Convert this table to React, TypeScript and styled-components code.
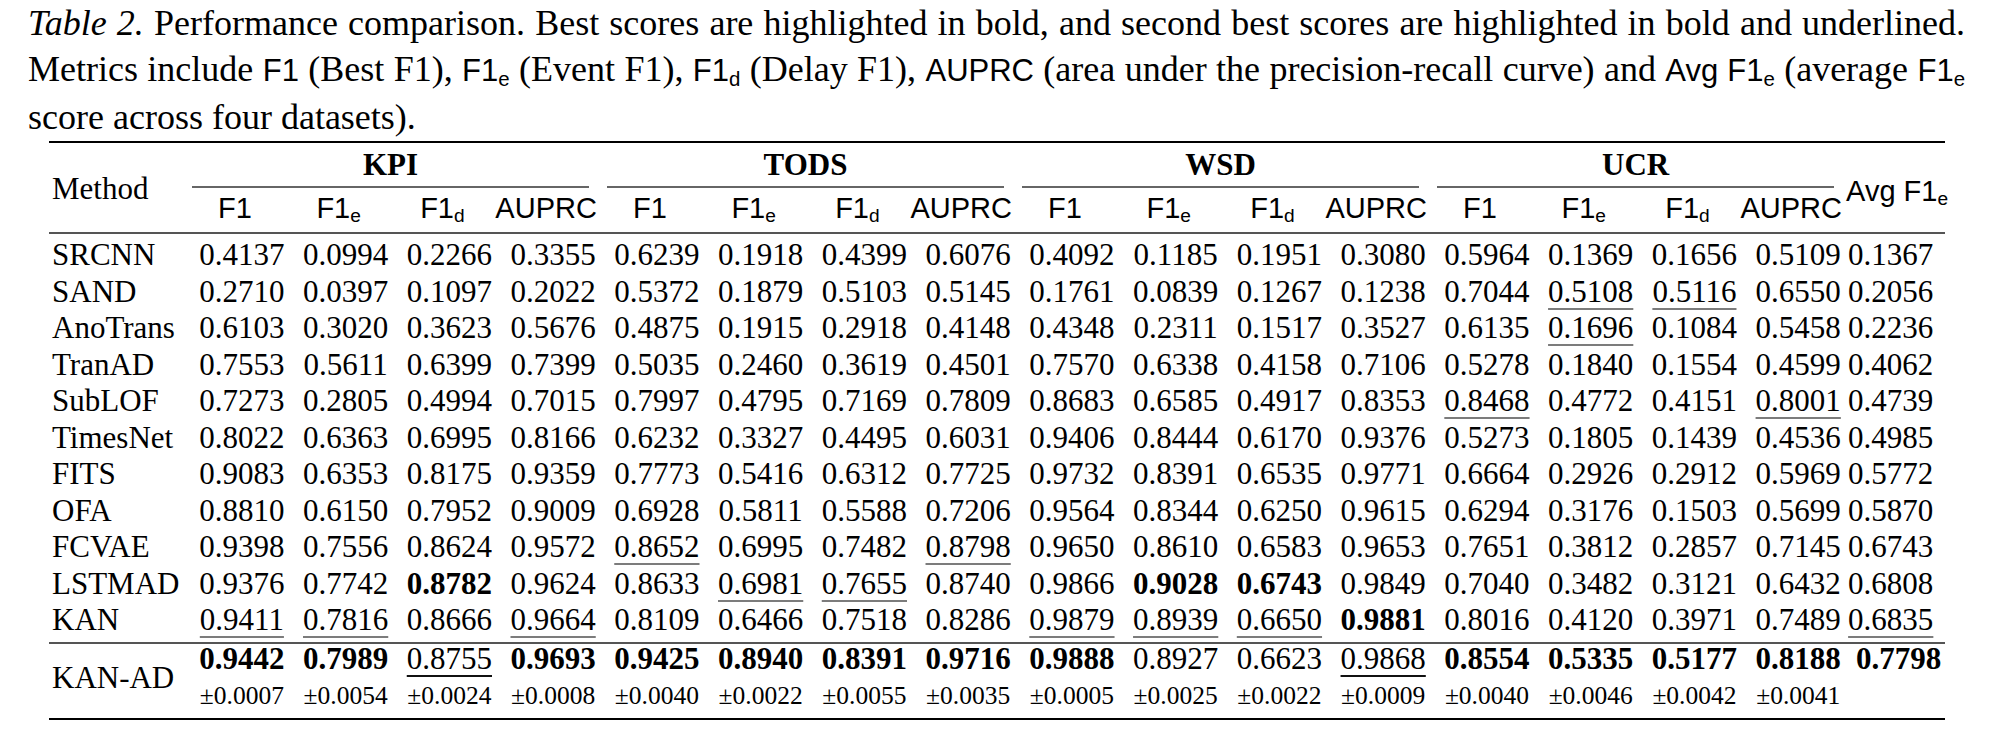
import React from "react";
import styled, { createGlobalStyle, css } from "styled-components";

const GlobalStyle = createGlobalStyle`
  html, body { margin: 0; padding: 0; background: #ffffff; }
  body { font-family: "Liberation Serif", "Times New Roman", serif; color: #000; }
`;

const Page = styled.div`
  width: 1990px;
  padding-left: 28px;
  box-sizing: border-box;
`;

const Caption = styled.div`
  width: 1937px;
  font-size: 36px;
  line-height: 46px;
`;

const CaptionLine = styled.div<{ $justify?: boolean }>`
  text-align: ${(p) => (p.$justify ? "justify" : "left")};
  text-align-last: ${(p) => (p.$justify ? "justify" : "left")};
`;

const Italic = styled.span`
  font-style: italic;
`;

const Sf = styled.span<{ $size: number }>`
  font-family: "Liberation Sans", Arial, sans-serif;
  font-size: ${(p) => p.$size}px;
`;

const Sub = styled.span`
  font-size: 0.66em;
  line-height: 0;
  vertical-align: -0.22em;
`;

const Table = styled.table`
  margin-top: 1px;
  margin-left: 21px;
  width: 1896px;
  table-layout: fixed;
  border-collapse: separate;
  border-spacing: 0;
  font-size: 31px;
  line-height: 30px;
`;

const Col = styled.col<{ $w: number }>`
  width: ${(p) => p.$w}px;
`;

const CornerHead = styled.th<{ $pt: number }>`
  box-sizing: border-box;
  font-weight: normal;
  text-align: left;
  vertical-align: middle;
  padding: ${(p) => p.$pt}px 0 0 3px;
  border-top: 2px solid #000;
  border-bottom: 2px solid #555;
  white-space: nowrap;
`;

const GroupHead = styled.th`
  box-sizing: border-box;
  height: 47px;
  padding: 0;
  border-top: 2px solid #000;
  vertical-align: bottom;
`;

const GroupTitle = styled.div`
  margin: 0 9px;
  height: 43px;
  line-height: 43px;
  border-bottom: 2px solid #666;
  font-weight: bold;
  text-align: center;
`;

const SubHead = styled.th`
  box-sizing: border-box;
  height: 46px;
  padding: 0 0 4px 0;
  font-weight: normal;
  text-align: center;
  vertical-align: middle;
  border-bottom: 2px solid #555;
  white-space: nowrap;
`;

type Place = "first" | "plain" | "lastPlain" | "oursTop" | "oursBottom";

const placeStyle = (p: Place) => {
  switch (p) {
    case "first":
      return css`
        height: 39.5px;
        padding-top: 3px;
      `;
    case "lastPlain":
      return css`
        height: 39.5px;
        padding-bottom: 3px;
      `;
    case "oursTop":
      return css`
        height: 33px;
        border-top: 2px solid #555;
      `;
    case "oursBottom":
      return css`
        height: 45px;
        border-bottom: 2px solid #000;
        font-size: 25.5px;
      `;
    default:
      return css`
        height: 36.5px;
      `;
  }
};

const NameCell = styled.td<{ $place: Place }>`
  box-sizing: border-box;
  padding: 0 0 0 3px;
  text-align: left;
  vertical-align: middle;
  white-space: nowrap;
  ${(p) => placeStyle(p.$place)}
`;

const OursName = styled.td`
  box-sizing: border-box;
  padding: 0 0 6px 3px;
  text-align: left;
  vertical-align: middle;
  white-space: nowrap;
  border-top: 2px solid #555;
  border-bottom: 2px solid #000;
`;

const Cell = styled.td<{ $place: Place; $avg?: boolean; $shift?: number }>`
  box-sizing: border-box;
  padding: 0;
  text-align: ${(p) => (p.$avg ? "left" : "center")};
  vertical-align: middle;
  white-space: nowrap;
  ${(p) => placeStyle(p.$place)}
  padding-left: ${(p) => (p.$shift !== undefined ? p.$shift : p.$avg ? 5 : 14)}px;
`;

const Bold = styled.span`
  font-weight: bold;
`;

const Underlined = styled.span<{ $tone: "grey" | "black" }>`
  text-decoration-line: underline;
  text-decoration-thickness: 2px;
  text-decoration-skip-ink: none;
  text-underline-offset: 6px;
  text-decoration-color: ${(p) => (p.$tone === "grey" ? "#7c7c7c" : "#111")};
`;

type Row = { name: string; values: string[] };

const rows: Row[] = [
  { name: "SRCNN", values: "0.4137 0.0994 0.2266 0.3355 0.6239 0.1918 0.4399 0.6076 0.4092 0.1185 0.1951 0.3080 0.5964 0.1369 0.1656 0.5109 0.1367".split(" ") },
  { name: "SAND", values: "0.2710 0.0397 0.1097 0.2022 0.5372 0.1879 0.5103 0.5145 0.1761 0.0839 0.1267 0.1238 0.7044 _0.5108 _0.5116 0.6550 0.2056".split(" ") },
  { name: "AnoTrans", values: "0.6103 0.3020 0.3623 0.5676 0.4875 0.1915 0.2918 0.4148 0.4348 0.2311 0.1517 0.3527 0.6135 _0.1696 0.1084 0.5458 0.2236".split(" ") },
  { name: "TranAD", values: "0.7553 0.5611 0.6399 0.7399 0.5035 0.2460 0.3619 0.4501 0.7570 0.6338 0.4158 0.7106 0.5278 0.1840 0.1554 0.4599 0.4062".split(" ") },
  { name: "SubLOF", values: "0.7273 0.2805 0.4994 0.7015 0.7997 0.4795 0.7169 0.7809 0.8683 0.6585 0.4917 0.8353 _0.8468 0.4772 0.4151 _0.8001 0.4739".split(" ") },
  { name: "TimesNet", values: "0.8022 0.6363 0.6995 0.8166 0.6232 0.3327 0.4495 0.6031 0.9406 0.8444 0.6170 0.9376 0.5273 0.1805 0.1439 0.4536 0.4985".split(" ") },
  { name: "FITS", values: "0.9083 0.6353 0.8175 0.9359 0.7773 0.5416 0.6312 0.7725 0.9732 0.8391 0.6535 0.9771 0.6664 0.2926 0.2912 0.5969 0.5772".split(" ") },
  { name: "OFA", values: "0.8810 0.6150 0.7952 0.9009 0.6928 0.5811 0.5588 0.7206 0.9564 0.8344 0.6250 0.9615 0.6294 0.3176 0.1503 0.5699 0.5870".split(" ") },
  { name: "FCVAE", values: "0.9398 0.7556 0.8624 0.9572 _0.8652 0.6995 0.7482 _0.8798 0.9650 0.8610 0.6583 0.9653 0.7651 0.3812 0.2857 0.7145 0.6743".split(" ") },
  { name: "LSTMAD", values: "0.9376 0.7742 *0.8782 0.9624 0.8633 _0.6981 _0.7655 0.8740 0.9866 *0.9028 *0.6743 0.9849 0.7040 0.3482 0.3121 0.6432 0.6808".split(" ") },
  { name: "KAN", values: "_0.9411 _0.7816 0.8666 _0.9664 0.8109 0.6466 0.7518 0.8286 _0.9879 _0.8939 _0.6650 *0.9881 0.8016 0.4120 0.3971 0.7489 _0.6835".split(" ") },
];

const ours = "*0.9442 *0.7989 _0.8755 *0.9693 *0.9425 *0.8940 *0.8391 *0.9716 *0.9888 0.8927 0.6623 _0.9868 *0.8554 *0.5335 *0.5177 *0.8188 *0.7798".split(" ");
const oursStd = "±0.0007 ±0.0054 ±0.0024 ±0.0008 ±0.0040 ±0.0022 ±0.0055 ±0.0035 ±0.0005 ±0.0025 ±0.0022 ±0.0009 ±0.0040 ±0.0046 ±0.0042 ±0.0041".split(" ");

const groups = ["KPI", "TODS", "WSD", "UCR"];

function Value({ v, tone }: { v: string; tone: "grey" | "black" }) {
  const text = v.replace(/^[*_]/, "");
  if (v.startsWith("_")) return <Underlined $tone={tone}>{text}</Underlined>;
  if (v.startsWith("*")) return <Bold>{text}</Bold>;
  return <>{text}</>;
}

function Metric({ name, sub, size }: { name: string; sub?: string; size: number }) {
  return (
    <Sf $size={size}>
      {name}
      {sub && <Sub>{sub}</Sub>}
    </Sf>
  );
}

const metricDefs: { name: string; sub?: string }[] = [
  { name: "F1" },
  { name: "F1", sub: "e" },
  { name: "F1", sub: "d" },
  { name: "AUPRC" },
];

export default function App() {
  const colWidths = [134, ...Array(16).fill(103.75), 102];
  return (
    <>
      <GlobalStyle />
      <Page>
        <Caption>
          <CaptionLine $justify>
            <Italic>Table 2.</Italic> Performance comparison. Best scores are highlighted in bold, and second best scores
            are highlighted in bold and underlined.
          </CaptionLine>
          <CaptionLine $justify>
            Metrics include <Metric name="F1" size={31} /> (Best F1), <Metric name="F1" sub="e" size={31} /> (Event F1),{" "}
            <Metric name="F1" sub="d" size={31} /> (Delay F1), <Metric name="AUPRC" size={31} /> (area under the
            precision-recall curve) and <Metric name="Avg F1" sub="e" size={31} /> (average{" "}
            <Metric name="F1" sub="e" size={31} />
          </CaptionLine>
          <CaptionLine>score across four datasets).</CaptionLine>
        </Caption>
        <Table>
          <colgroup>
            {colWidths.map((w, i) => (
              <Col key={i} $w={w} />
            ))}
          </colgroup>
          <thead>
            <tr>
              <CornerHead rowSpan={2} $pt={3}>
                Method
              </CornerHead>
              {groups.map((g) => (
                <GroupHead key={g} colSpan={4}>
                  <GroupTitle>{g}</GroupTitle>
                </GroupHead>
              ))}
              <CornerHead rowSpan={2} $pt={6}>
                <Metric name="Avg F1" sub="e" size={29} />
              </CornerHead>
            </tr>
            <tr>
              {groups.map((g) =>
                metricDefs.map((m, i) => (
                  <SubHead key={g + i}>
                    <Metric name={m.name} sub={m.sub} size={29} />
                  </SubHead>
                ))
              )}
            </tr>
          </thead>
          <tbody>
            {rows.map((r, ri) => {
              const place: Place = ri === 0 ? "first" : ri === rows.length - 1 ? "lastPlain" : "plain";
              return (
                <tr key={r.name}>
                  <NameCell $place={place}>{r.name}</NameCell>
                  {r.values.map((v, i) => (
                    <Cell key={i} $place={place} $avg={i === 16}>
                      <Value v={v} tone="grey" />
                    </Cell>
                  ))}
                </tr>
              );
            })}
            <tr>
              <OursName rowSpan={2}>KAN-AD</OursName>
              {ours.map((v, i) => (
                <Cell key={i} $place="oursTop" $avg={i === 16} $shift={i === 16 ? 13 : undefined}>
                  <Value v={v} tone="black" />
                </Cell>
              ))}
            </tr>
            <tr>
              {oursStd.map((v, i) => (
                <Cell key={i} $place="oursBottom">
                  {v}
                </Cell>
              ))}
              <Cell $place="oursBottom" $avg />
            </tr>
          </tbody>
        </Table>
      </Page>
    </>
  );
}
